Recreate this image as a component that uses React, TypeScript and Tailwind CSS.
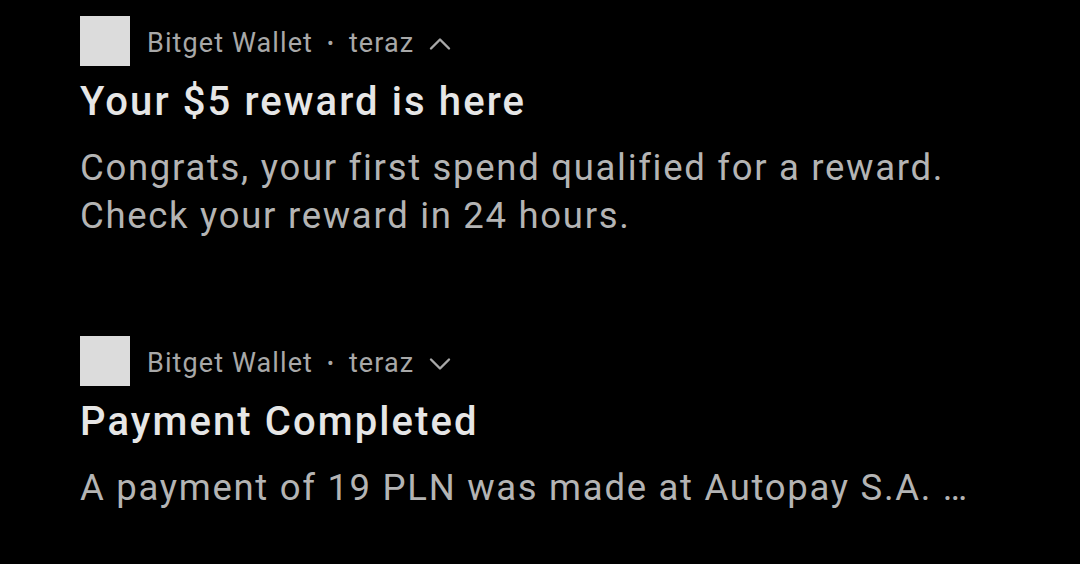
import React from "react";

function Chevron({ up }: { up: boolean }) {
  return (
    <svg width="22" height="14" viewBox="0 0 22 14" className="ml-[15px] mt-[1px]">
      <path
        d={up ? "M2 11.5 L11 2.5 L20 11.5" : "M2 2.5 L11 11.5 L20 2.5"}
        fill="none"
        stroke="#a8a8a8"
        strokeWidth="2.4"
        strokeLinecap="round"
        strokeLinejoin="round"
      />
    </svg>
  );
}

function Notification({
  title,
  lines,
  up,
}: {
  title: string;
  lines: string[];
  up: boolean;
}) {
  return (
    <div className="flex flex-col">
      <div className="flex items-center h-[50px]">
        <div className="w-[50px] h-[50px] bg-[#dcdcdc]" />
        <div className="ml-[17px] mt-[4px] flex items-center text-[27px] tracking-[1.1px] text-[#a8a8a8] leading-[50px]">
          <span>Bitget Wallet</span>
          <span className="mx-[14px] text-[20px]">•</span>
          <span>teraz</span>
          <Chevron up={up} />
        </div>
      </div>
      <div className="mt-[12px] text-[40px] font-medium tracking-[2.1px] text-[#e6e6e6] leading-[48px]">
        {title}
      </div>
      <div className="mt-[18px] text-[36.5px] tracking-[1.7px] text-[#b4b4b4] leading-[48px]">
        {lines.map((l) => (
          <div key={l}>{l}</div>
        ))}
      </div>
    </div>
  );
}

export default function App() {
  return (
    <div
      className="w-[1080px] h-[564px] bg-black pl-[80px] pt-[16px] flex flex-col overflow-hidden"
      style={{ fontFamily: "Roboto, 'Noto Sans', sans-serif" }}
    >
      <Notification
        title="Your $5 reward is here"
        lines={[
          "Congrats, your first spend qualified for a reward.",
          "Check your reward in 24 hours.",
        ]}
        up={true}
      />
      <div className="mt-[96px]">
        <Notification
          title="Payment Completed"
          lines={["A payment of 19 PLN was made at Autopay S.A. …"]}
          up={false}
        />
      </div>
    </div>
  );
}
